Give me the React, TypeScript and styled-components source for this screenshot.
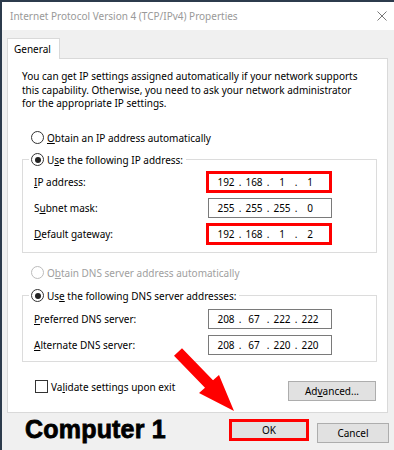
import React from 'react';
import styled, { createGlobalStyle } from 'styled-components';

const GlobalStyle = createGlobalStyle`
  body {
    margin: 0;
    background: #f0f0f0;
    font-family: "Noto Sans", "DejaVu Sans", sans-serif;
  }
`;

const Window = styled.div`
  position: relative;
  box-sizing: border-box;
  width: 394px;
  height: 450px;
  display: flex;
  flex-direction: column;
  background: #f0f0f0;
  border-left: 2px solid #2c3b4c;
  border-top: 2px solid #2c3b4c;
  font-size: 10px;
  color: #000;
  overflow: hidden;
`;

const TitleBar = styled.div`
  height: 28px;
  display: flex;
  align-items: center;
  justify-content: space-between;
  padding: 0 7px 0 8px;
  background: #fff;
  color: #999;
  font-size: 10px;
`;

const Body = styled.div`
  padding: 8px 6px 0 5px;
`;

const TabStrip = styled.div`
  display: flex;
`;

const Tab = styled.div`
  position: relative;
  z-index: 1;
  box-sizing: border-box;
  width: 53px;
  height: 21px;
  margin-bottom: -1px;
  padding: 3px 0 0 6px;
  background: #fff;
  border: 1px solid #d9d9d9;
  border-bottom: none;
`;

const Panel = styled.div`
  box-sizing: border-box;
  width: 381px;
  height: 355px;
  padding: 11px 10px 0 14px;
  background: #fff;
  border: 1px solid #d9d9d9;
  display: flex;
  flex-direction: column;
`;

const Intro = styled.p`
  margin: 0;
  line-height: 13.5px;
  white-space: nowrap;
`;

const Option = styled.label<{ $disabled?: boolean; $top?: number }>`
  display: flex;
  align-items: center;
  gap: 3px;
  height: 14px;
  margin-top: ${({ $top }) => $top ?? 0}px;
  margin-left: 9px;
  color: ${({ $disabled }) => ($disabled ? '#a0a0a0' : '#000')};
`;

const Radio = styled.span<{ $checked?: boolean; $disabled?: boolean }>`
  position: relative;
  box-sizing: border-box;
  width: 13px;
  height: 13px;
  border-radius: 50%;
  background: #fff;
  border: 1px solid ${({ $disabled }) => ($disabled ? '#bcbcbc' : '#333')};
  &::after {
    content: '';
    display: ${({ $checked }) => ($checked ? 'block' : 'none')};
    position: absolute;
    left: 2.5px;
    top: 2.5px;
    width: 6px;
    height: 6px;
    border-radius: 50%;
    background: #222;
  }
`;

const Checkbox = styled.span`
  box-sizing: border-box;
  width: 13px;
  height: 13px;
  background: #fff;
  border: 1px solid #333;
`;

const Group = styled.fieldset<{ $top: number }>`
  margin: ${({ $top }) => $top}px 0 0;
  padding: 0;
  min-width: 0;
  border: 1px solid #dcdcdc;
`;

const Legend = styled.legend`
  margin-left: 6px;
  padding: 0 3px 0 2px;
  height: 14px;
  display: flex;
  align-items: center;
  gap: 3px;
`;

const Rows = styled.div<{ $pt: number; $pb: number }>`
  display: flex;
  flex-direction: column;
  gap: 4px;
  padding: ${({ $pt, $pb }) => `${$pt}px 44px ${$pb}px 11px`};
`;

const Row = styled.div`
  display: flex;
  align-items: center;
  justify-content: space-between;
  height: 22px;
`;

const IpBox = styled.div<{ $highlight?: boolean }>`
  box-sizing: border-box;
  display: flex;
  align-items: center;
  width: ${({ $highlight }) => ($highlight ? 126 : 124)}px;
  height: ${({ $highlight }) => ($highlight ? 22 : 20)}px;
  padding-left: 6px;
  background: #fff;
  border: ${({ $highlight }) => ($highlight ? '3px solid #f00' : '1px solid #7a7a7a')};
`;

const Octet = styled.span`
  width: 22px;
  text-align: center;
`;

const Dot = styled.span`
  width: 6px;
  text-align: center;
`;

const Footer = styled.div`
  display: flex;
  align-items: flex-start;
  justify-content: space-between;
  margin-top: 18px;
  padding-right: 1px;
`;

const CheckOption = styled.label`
  display: flex;
  align-items: center;
  gap: 3px;
  height: 14px;
  margin-left: 13px;
`;

const Button = styled.button<{ $w: number; $h: number; $top?: number; $highlight?: boolean }>`
  box-sizing: border-box;
  width: ${({ $w }) => $w}px;
  height: ${({ $h }) => $h}px;
  margin-top: ${({ $top }) => $top ?? 0}px;
  padding: 0;
  font: inherit;
  color: #000;
  background: #e1e1e1;
  border: ${({ $highlight }) => ($highlight ? '3px solid #f00' : '1px solid #adadad')};
`;

const BottomBar = styled.div`
  flex: 1;
  display: flex;
  align-items: flex-start;
  gap: 8px;
  padding: 0 5px 0 23px;
`;

const Caption = styled.div`
  margin: 4px auto 0 0;
  font-family: "Liberation Sans", Arial, sans-serif;
  font-weight: bold;
  font-size: 25px;
  line-height: 25px;
  letter-spacing: 0.2px;
  -webkit-text-stroke: 0.8px #000;
`;

const Arrow = styled.svg`
  position: absolute;
  left: 168px;
  top: 343px;
  width: 70px;
  height: 70px;
`;

const Key = styled.u`
  text-decoration-thickness: 1px;
  text-underline-offset: 1px;
`;

const Ip = ({ parts, highlight }: { parts: string[]; highlight?: boolean }) => (
  <IpBox $highlight={highlight}>
    {parts.map((p, i) => (
      <React.Fragment key={i}>
        {i > 0 && <Dot>.</Dot>}
        <Octet>{p}</Octet>
      </React.Fragment>
    ))}
  </IpBox>
);

const CloseIcon = () => (
  <svg width="10" height="10" viewBox="0 0 10 10">
    <path d="M0.5 0.5L9.5 9.5M9.5 0.5L0.5 9.5" stroke="#777" strokeWidth="1" fill="none" />
  </svg>
);

export default function App() {
  return (
    <>
      <GlobalStyle />
      <Window>
        <TitleBar>
          <span>Internet Protocol Version 4 (TCP/IPv4) Properties</span>
          <CloseIcon />
        </TitleBar>
        <Body>
          <TabStrip>
            <Tab>General</Tab>
          </TabStrip>
          <Panel>
            <Intro>
              You can get IP settings assigned automatically if your network supports
              <br />
              this capability. Otherwise, you need to ask your network administrator
              <br />
              for the appropriate IP settings.
            </Intro>
            <Option $top={20}>
              <Radio />
              <span>
                <Key>O</Key>btain an IP address automatically
              </span>
            </Option>
            <Group $top={8}>
              <Legend>
                <Radio $checked />
                <span>
                  U<Key>s</Key>e the following IP address:
                </span>
              </Legend>
              <Rows $pt={4} $pb={7}>
                <Row>
                  <span>
                    <Key>I</Key>P address:
                  </span>
                  <Ip parts={['192', '168', '1', '1']} highlight />
                </Row>
                <Row>
                  <span>
                    S<Key>u</Key>bnet mask:
                  </span>
                  <Ip parts={['255', '255', '255', '0']} />
                </Row>
                <Row>
                  <span>
                    <Key>D</Key>efault gateway:
                  </span>
                  <Ip parts={['192', '168', '1', '2']} highlight />
                </Row>
              </Rows>
            </Group>
            <Option $top={13} $disabled>
              <Radio $disabled />
              <span>
                O<Key>b</Key>tain DNS server address automatically
              </span>
            </Option>
            <Group $top={9}>
              <Legend>
                <Radio $checked />
                <span>
                  Us<Key>e</Key> the following DNS server addresses:
                </span>
              </Legend>
              <Rows $pt={5} $pb={5}>
                <Row>
                  <span>
                    <Key>P</Key>referred DNS server:
                  </span>
                  <Ip parts={['208', '67', '222', '222']} />
                </Row>
                <Row>
                  <span>
                    <Key>A</Key>lternate DNS server:
                  </span>
                  <Ip parts={['208', '67', '220', '220']} />
                </Row>
              </Rows>
            </Group>
            <Footer>
              <CheckOption>
                <Checkbox />
                <span>
                  Va<Key>l</Key>idate settings upon exit
                </span>
              </CheckOption>
              <Button $w={88} $h={20} $top={1}>
                Ad<Key>v</Key>anced...
              </Button>
            </Footer>
          </Panel>
        </Body>
        <BottomBar>
          <Caption>Computer 1</Caption>
          <Button $w={80} $h={22} $top={6} $highlight>
            OK
          </Button>
          <Button $w={72} $h={20} $top={10}>
            Cancel
          </Button>
        </BottomBar>
        <Arrow viewBox="0 0 70 70">
          <polygon points="4,10.8 12,3.2 43,35.2 49,30 64,66 29,48 35,42.8" fill="#f00" />
        </Arrow>
      </Window>
    </>
  );
}
